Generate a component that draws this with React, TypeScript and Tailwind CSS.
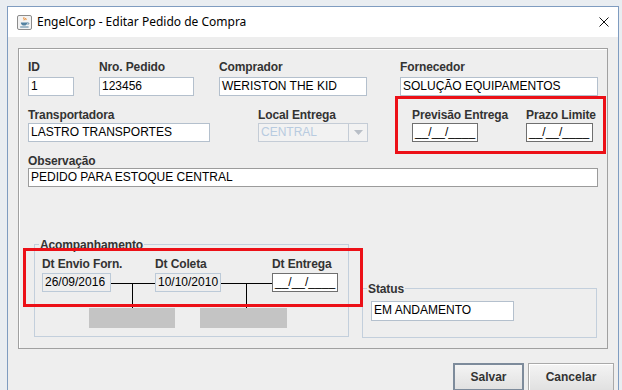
import React from "react";

const label = "h-[14px] whitespace-nowrap text-[12px] font-bold leading-[14px] tracking-[-0.12px] text-[#333333]";
const field = "h-[19px] whitespace-nowrap overflow-hidden border px-[2px] text-[12px] leading-[17px] text-black";
const light = "border-[#b4c0cd] bg-white";
const dark = "border-[#6f6f6f] bg-white";
const readOnly = "border-[#bccad8] bg-[#eeeeee]";

function JavaIcon() {
  return (
    <svg width="15" height="15" viewBox="0 0 15 15">
      <rect x="0.5" y="0.5" width="14" height="14" rx="1.5" fill="#f3f3f3" stroke="#8c8c8c" />
      <path d="M7 2.3c-1.1 1 .9 1.7 0 3M8.9 3c-.7.8.5 1.2 0 2.1" stroke="#e76f00" fill="none" strokeWidth="1" />
      <path d="M3.8 7.4h6.6c0 2-1.5 3.1-3.3 3.1S3.8 9.4 3.8 7.4z" fill="#5382a1" />
      <path d="M10.2 7.9h1.1c.9 0 .8 1.6-.7 1.6" stroke="#5382a1" fill="none" strokeWidth="0.9" />
      <path d="M3.2 12h8.4" stroke="#5382a1" strokeWidth="1" />
    </svg>
  );
}

function Group({ title, className, children }: { title: string; className: string; children?: React.ReactNode }) {
  return (
    <div className={"relative border border-[#c3cfdc] " + className}>
      <div className={label + " -mt-[7px] ml-[4px] w-fit bg-[#eeeeee] px-[1px]"}>{title}</div>
      {children}
    </div>
  );
}

export default function App() {
  return (
    <div className="relative h-[390px] w-[622px] overflow-hidden bg-[#e9edf1] pl-[7px] pt-[6px] font-['Liberation_Sans',Arial,sans-serif]">
      {/* dialog window */}
      <div className="h-[400px] w-[612px] border border-[#7f9cc0] bg-[#eeeeee]">
        {/* title bar */}
        <div className="flex h-[30px] items-center bg-white pl-[9px] pr-[9px]">
          <JavaIcon />
          <span className="ml-[5px] font-['Noto_Sans',sans-serif] text-[12px] text-black">
            EngelCorp - Editar Pedido de Compra
          </span>
          <svg className="ml-auto" width="10" height="10" viewBox="0 0 10 10">
            <path d="M0.5 0.5L9.5 9.5M9.5 0.5L0.5 9.5" stroke="#111" strokeWidth="1" />
          </svg>
        </div>

        {/* main panel */}
        <div className="ml-[10px] mt-[11px] h-[301px] w-[590px] border border-[#a0a0a0] pl-[9px] pt-[11px] shadow-[inset_1px_1px_0_#ffffff]">
          {/* row 1 */}
          <div className="flex">
            <div className="w-[46px]">
              <div className={label}>ID</div>
              <div className={field + " mt-[3px] " + light}>1</div>
            </div>
            <div className="ml-[25px] w-[95px]">
              <div className={label}>Nro. Pedido</div>
              <div className={field + " mt-[3px] " + light}>123456</div>
            </div>
            <div className="ml-[25px] w-[148px]">
              <div className={label}>Comprador</div>
              <div className={field + " mt-[3px] " + light}>WERISTON THE KID</div>
            </div>
            <div className="ml-[33px] w-[198px]">
              <div className={label}>Fornecedor</div>
              <div className={field + " mt-[3px] " + light}>SOLUÇÃO EQUIPAMENTOS</div>
            </div>
          </div>

          {/* row 2 */}
          <div className="mt-[12px] flex">
            <div className="w-[182px]">
              <div className={label}>Transportadora</div>
              <div className={field + " mt-[1px] " + light}>LASTRO TRANSPORTES</div>
            </div>
            <div className="ml-[48px] w-[110px]">
              <div className={label}>Local Entrega</div>
              <div className="mt-[1px] flex h-[19px] border border-[#c4ccd6] bg-[#f2f2f2]">
                <span className="flex-1 px-[2px] text-[12px] leading-[17px] text-[#b8cbe0]">CENTRAL</span>
                <span className="flex w-[19px] items-center justify-center border-l border-[#c4ccd6]">
                  <svg width="9" height="5" viewBox="0 0 9 5">
                    <path d="M0 0h9L4.5 5z" fill="#b9bfc7" />
                  </svg>
                </span>
              </div>
            </div>
            <div className="ml-[44px] w-[66px]">
              <div className={label}>Previsão Entrega</div>
              <div className={field + " mt-[1px] flex " + dark}>
                <span className="mt-[2px] h-[13px] w-px bg-black" />
                <span>__/__/____</span>
              </div>
            </div>
            <div className="ml-[48px] w-[67px]">
              <div className={label}>Prazo Limite</div>
              <div className={field + " mt-[1px] " + dark}>__/__/____</div>
            </div>
          </div>

          {/* row 3 */}
          <div className="mt-[12px] w-[570px]">
            <div className={label}>Observação</div>
            <div className={field + " border-[#9b9b9b] bg-white"}>PEDIDO PARA ESTOQUE CENTRAL</div>
          </div>

          {/* row 4 */}
          <div className="mt-[57px] flex items-start">
            <Group title="Acompanhamento" className="ml-[6px] h-[93px] w-[315px]">
              <div className="mt-[5px] flex">
                <div className="ml-[7px] w-[69px]">
                  <div className={label}>Dt Envio Forn.</div>
                  <div className={field + " mt-[2px] " + readOnly}>26/09/2016</div>
                </div>
                <div className="ml-[44px] w-[66px]">
                  <div className={label}>Dt Coleta</div>
                  <div className={field + " mt-[2px] " + readOnly}>10/10/2010</div>
                </div>
                <div className="ml-[51px] w-[66px]">
                  <div className={label}>Dt Entrega</div>
                  <div className={field + " mt-[2px] " + dark}>__/__/____</div>
                </div>
              </div>
              <div className="mt-[16px] flex">
                <div className="ml-[54px] h-[20px] w-[86px] bg-[#c4c4c4]" />
                <div className="ml-[25px] h-[20px] w-[87px] bg-[#c4c4c4]" />
              </div>
              {/* connectors */}
              <svg className="pointer-events-none absolute left-0 top-0" width="313" height="91" viewBox="0 0 313 91">
                <path d="M76 38.5H120M186 38.5H237M97.5 38.5V63M211.5 38.5V63" stroke="#000" strokeWidth="1" />
              </svg>
            </Group>
            <Group title="Status" className="ml-[13px] mt-[44px] h-[50px] w-[235px]">
              <div className={field + " ml-[8px] mt-[5px] h-[20px] w-[143px] " + light}>EM ANDAMENTO</div>
            </Group>
          </div>
        </div>

        {/* buttons */}
        <div className="mt-[14px] flex justify-end gap-[4px] pr-[4px]">
          <button className="h-[28px] w-[71px] border-2 border-[#7d8b9b] bg-gradient-to-b from-[#f4f4f4] to-[#e1e1e1] text-[12px] font-bold text-[#333333]">
            Salvar
          </button>
          <button className="h-[28px] w-[86px] border border-[#a9a9a9] bg-gradient-to-b from-[#f4f4f4] to-[#e1e1e1] text-[12px] font-bold text-[#333333] shadow-[inset_1px_1px_0_#ffffff]">
            Cancelar
          </button>
        </div>
      </div>

      {/* annotations */}
      <div className="pointer-events-none absolute left-[395px] top-[96px] h-[58px] w-[211px] border-[3px] border-[#ec1017]" />
      <div className="pointer-events-none absolute left-[23px] top-[248px] h-[59px] w-[340px] border-[3px] border-[#ec1017]" />
    </div>
  );
}
